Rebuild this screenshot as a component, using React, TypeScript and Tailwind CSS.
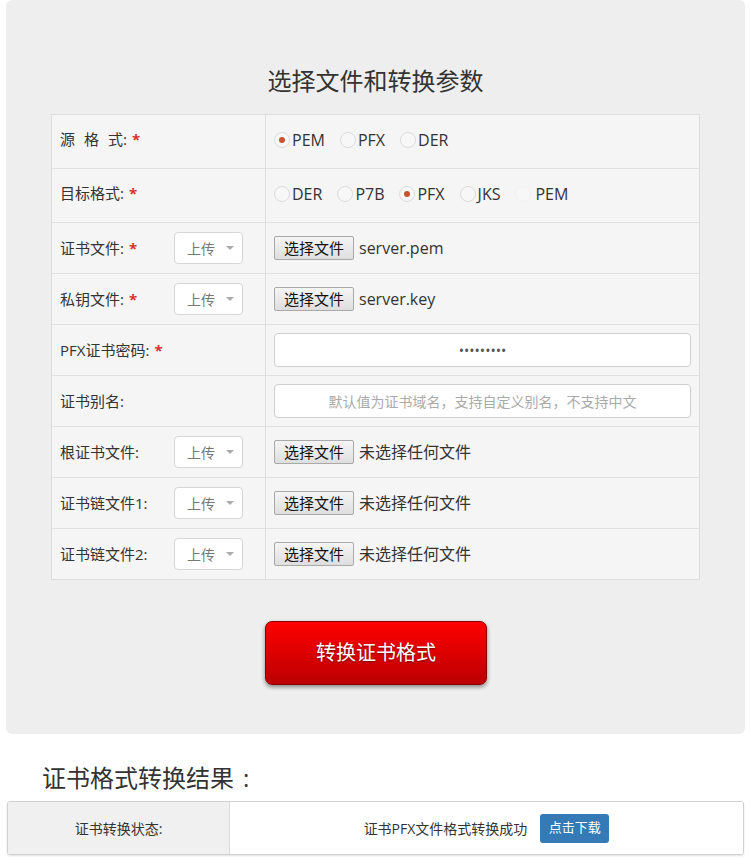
import React from 'react';

const FONT = '"Open Sans", "Noto Sans CJK SC", sans-serif';

const Star = () => <span className="ml-[5px] text-[#d9302c] font-bold">*</span>;

const Radio = ({ label, checked, faint }: { label: string; checked?: boolean; faint?: boolean }) => (
  <span className="inline-flex items-center mr-[15px]">
    <span
      className={`w-[16px] h-[16px] rounded-full border flex items-center justify-center bg-[#f7f7f7] ${faint ? 'border-[#f0f0f0]' : 'border-[#dcdcdc]'}`}
    >
      {checked && <span className="w-[6px] h-[6px] rounded-full bg-[#c9522f]" />}
    </span>
    <span className={`text-[16px] text-[#333] ${faint ? 'ml-[4px]' : 'ml-[2px]'}`}>{label}</span>
  </span>
);

const Upload = () => (
  <div className="w-[69px] h-[32px] bg-white border border-[#d6d6d6] rounded-[4px] flex items-center pl-[12px] text-[14px] text-[#777]">
    <span>上传</span>
    <span className="ml-[11px] w-0 h-0 border-l-[4px] border-r-[4px] border-t-[4px] border-l-transparent border-r-transparent border-t-[#aaa]" />
  </div>
);

const FileBtn = ({ name }: { name: string }) => (
  <div className="flex items-center">
    <span className="h-[24px] w-[80px] flex items-center justify-center border border-[#a9a9a9] rounded-[2px] bg-gradient-to-b from-[#f5f5f5] to-[#dedede] text-[15px] text-[#111]">
      选择文件
    </span>
    <span className="ml-[5px] text-[16px] text-[#333]">{name}</span>
  </div>
);

type Row = { label: React.ReactNode; upload?: boolean; content: React.ReactNode; h: string; radio?: boolean };

const rows: Row[] = [
  {
    label: (
      <>
        <span className="mr-[9px]">源</span>
        <span className="mr-[9px]">格</span>
        <span>式:</span>
        <Star />
      </>
    ),
    h: 'h-[53px]',
    radio: true,
    content: (
      <div className="flex items-center">
        <Radio label="PEM" checked />
        <Radio label="PFX" />
        <Radio label="DER" />
      </div>
    ),
  },
  {
    label: (
      <>
        目标格式:
        <Star />
      </>
    ),
    h: 'h-[54px]',
    radio: true,
    content: (
      <div className="flex items-center">
        <Radio label="DER" />
        <Radio label="P7B" />
        <Radio label="PFX" checked />
        <Radio label="JKS" />
        <Radio label="PEM" faint />
      </div>
    ),
  },
  {
    label: (
      <>
        证书文件:
        <Star />
      </>
    ),
    upload: true,
    h: 'h-[51px]',
    content: <FileBtn name="server.pem" />,
  },
  {
    label: (
      <>
        私钥文件:
        <Star />
      </>
    ),
    upload: true,
    h: 'h-[51px]',
    content: <FileBtn name="server.key" />,
  },
  {
    label: (
      <>
        PFX证书密码:
        <Star />
      </>
    ),
    h: 'h-[51px]',
    content: (
      <input
        type="password"
        readOnly
        value="123456789"
        className="w-full h-[34px] bg-white border border-[#cfcfcf] rounded-[4px] text-center text-[14px] text-[#555] outline-none"
      />
    ),
  },
  {
    label: '证书别名:',
    h: 'h-[51px]',
    content: (
      <input
        readOnly
        placeholder="默认值为证书域名，支持自定义别名，不支持中文"
        className="w-full h-[34px] bg-white border border-[#cfcfcf] rounded-[4px] text-center text-[14px] placeholder:text-[#aaa] outline-none"
      />
    ),
  },
  { label: '根证书文件:', upload: true, h: 'h-[51px]', content: <FileBtn name="未选择任何文件" /> },
  { label: '证书链文件1:', upload: true, h: 'h-[51px]', content: <FileBtn name="未选择任何文件" /> },
  { label: '证书链文件2:', upload: true, h: 'h-[51px]', content: <FileBtn name="未选择任何文件" /> },
];

export default function App() {
  return (
    <div className="w-[751px] bg-white pb-[13px]" style={{ fontFamily: FONT }}>
      {/* Form panel */}
      <div className="mx-[6px] bg-[#eeeeee] rounded-[6px] pt-[63px] pb-[49px]">
        <h2 className="text-center text-[24px] leading-[36px] text-[#333] mb-[15px]">选择文件和转换参数</h2>

        <div className="mx-[45px] border border-[#dddddd] bg-[#f5f5f5]">
          {rows.map((r, i) => (
            <div
              key={i}
              className={`grid grid-cols-[214px_1fr] ${r.h} ${i > 0 ? 'border-t border-[#e0e0e0]' : ''}`}
            >
              <div
                className={`flex items-center pl-[8px] border-r border-[#dddddd] text-[15px] text-[#333] ${r.radio ? 'pb-[4px]' : ''}`}
              >
                <div className="w-[114px] flex items-center">{r.label}</div>
                {r.upload && <Upload />}
              </div>
              <div className={`flex items-center pl-[8px] pr-[8px] ${r.radio ? 'pb-[4px]' : ''}`}>{r.content}</div>
            </div>
          ))}
        </div>

        <div className="flex justify-center mt-[41px]">
          <button className="w-[222px] h-[64px] ml-[1px] rounded-[7px] border border-[#8a0000] bg-gradient-to-b from-[#ff0000] to-[#bb0000] text-white text-[20px] shadow-[0_2px_4px_rgba(0,0,0,0.45)] [text-shadow:0_1px_2px_rgba(0,0,0,0.5)]">
            转换证书格式
          </button>
        </div>
      </div>

      {/* Result */}
      <h3 className="mt-[27px] ml-[42px] text-[24px] leading-[34px] text-[#333]">
        证书格式转换结果<span className="ml-[9px]">:</span>
      </h3>
      <div className="mx-[7px] mt-[6px] h-[54px] border border-[#d0d0d0] rounded-[3px] shadow-[0_1px_2px_rgba(0,0,0,0.12)] grid grid-cols-[222px_1fr] overflow-hidden">
        <div className="bg-[#f0f0f0] border-r border-[#dddddd] flex items-center justify-center text-[14px] text-[#333]">
          证书转换状态:
        </div>
        <div className="bg-white flex items-center justify-center text-[14px] text-[#333]">
          <span>证书PFX文件格式转换成功</span>
          <span className="ml-[13px] h-[29px] w-[69px] flex items-center justify-center bg-[#337ab7] rounded-[3px] text-white text-[13px]">
            点击下载
          </span>
        </div>
      </div>
    </div>
  );
}
